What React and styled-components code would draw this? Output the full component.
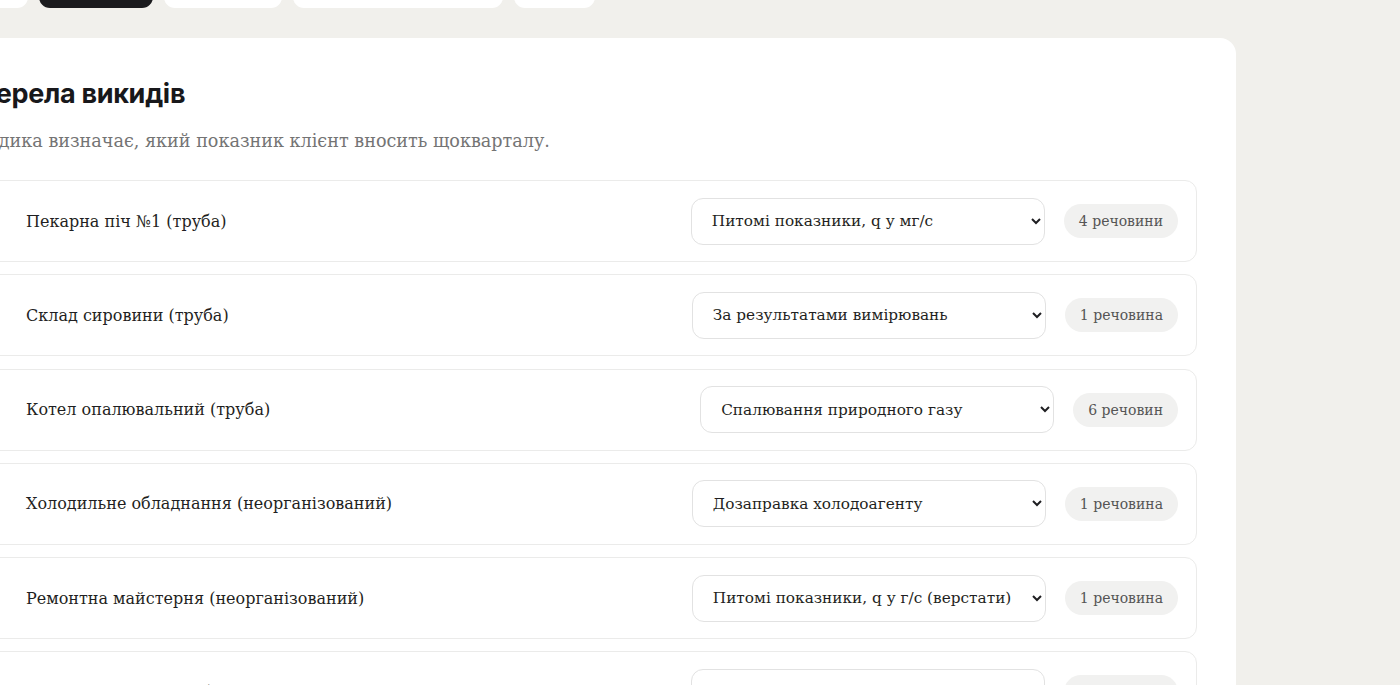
import React from "react";
import styled, { createGlobalStyle } from "styled-components";

const tabs = [
  { label: "Підприємство", width: 118 },
  { label: "Джерела", width: 114, active: true },
  { label: "Речовини", width: 118 },
  { label: "Квартальні показники", width: 210 },
  { label: "Звіт", width: 81 },
];

const methods = [
  "Питомі показники, q у мг/с",
  "За результатами вимірювань",
  "Спалювання природного газу",
  "Дозаправка холодоагенту",
  "Питомі показники, q у г/с (верстати)",
];

const sources = [
  { name: "Пекарна піч №1 (труба)", method: 0, count: "4 речовини" },
  { name: "Склад сировини (труба)", method: 1, count: "1 речовина" },
  { name: "Котел опалювальний (труба)", method: 2, count: "6 речовин" },
  { name: "Холодильне обладнання (неорганізований)", method: 3, count: "1 речовина" },
  { name: "Ремонтна майстерня (неорганізований)", method: 4, count: "1 речовина" },
  { name: "Пекарна піч №2 (труба)", method: 0, count: "4 речовини" },
];

function App() {
  return (
    <Page>
      <GlobalStyle />
      <Tabs>
        {tabs.map((t) => (
          <Tab key={t.label} $active={t.active} style={{ width: t.width }}>
            {t.label}
          </Tab>
        ))}
      </Tabs>
      <Card>
        <Title>Джерела викидів</Title>
        <Subtitle>Методика визначає, який показник клієнт вносить щокварталу.</Subtitle>
        <List>
          {sources.map((s) => (
            <Row key={s.name}>
              <Name>{s.name}</Name>
              <Select defaultValue={s.method}>
                {methods.map((m, i) => (
                  <option key={m} value={i}>
                    {m}
                  </option>
                ))}
              </Select>
              <Badge>{s.count}</Badge>
            </Row>
          ))}
        </List>
      </Card>
    </Page>
  );
}

const GlobalStyle = createGlobalStyle`
  html, body {
    margin: 0;
    background: #f1f0ec;
    overflow: hidden;
  }

  body {
    font-family: "DejaVu Serif", "Liberation Serif", serif;
    color: #1d1d20;
  }
`;

const Page = styled.div`
  width: 1326px;
  margin-left: -90px;
`;

const Tabs = styled.div`
  display: flex;
  gap: 11px;
  margin-top: -32px;
`;

const Tab = styled.div`
  height: 40px;
  border-radius: 11px;
  display: flex;
  align-items: center;
  justify-content: center;
  font-family: Inter, "Noto Sans", sans-serif;
  font-size: 14px;
  font-weight: 600;
  background: ${(p) => (p.$active ? "#1b1b1e" : "#ffffff")};
  color: ${(p) => (p.$active ? "#ffffff" : "#333")};
`;

const Card = styled.section`
  margin-top: 30px;
  background: #ffffff;
  border-radius: 16px;
  padding: 40px 39px 40px 40px;
`;

const Title = styled.h2`
  margin: 0;
  font-family: Inter, "Noto Sans", sans-serif;
  font-size: 27px;
  font-weight: 700;
  line-height: 32px;
  letter-spacing: -0.3px;
  color: #18181b;
`;

const Subtitle = styled.p`
  margin: 18px 0 0;
  font-size: 17.6px;
  line-height: 26px;
  color: #747474;
`;

const List = styled.div`
  display: flex;
  flex-direction: column;
  gap: 12.3px;
  margin-top: 26px;
`;

const Row = styled.div`
  display: flex;
  align-items: center;
  gap: 19px;
  height: 80px;
  padding: 0 18px 0 75px;
  border: 1px solid #ebebea;
  border-radius: 12px;
`;

const Name = styled.div`
  flex: 1;
  font-size: 16px;
  color: #1f1f22;
`;

const Select = styled.select`
  width: 354px;
  height: 47px;
  padding: 0 8px 0 16px;
  border: 1px solid #e2e2e2;
  border-radius: 12px;
  background: #ffffff;
  font-family: "DejaVu Serif", "Liberation Serif", serif;
  font-size: 15.3px;
  color: #1f1f22;
`;

const Badge = styled.span`
  height: 34px;
  padding: 0 15px;
  border-radius: 17px;
  display: inline-flex;
  align-items: center;
  background: #f1f1f0;
  font-size: 14px;
  color: #555555;
  white-space: nowrap;
`;

export default App;
